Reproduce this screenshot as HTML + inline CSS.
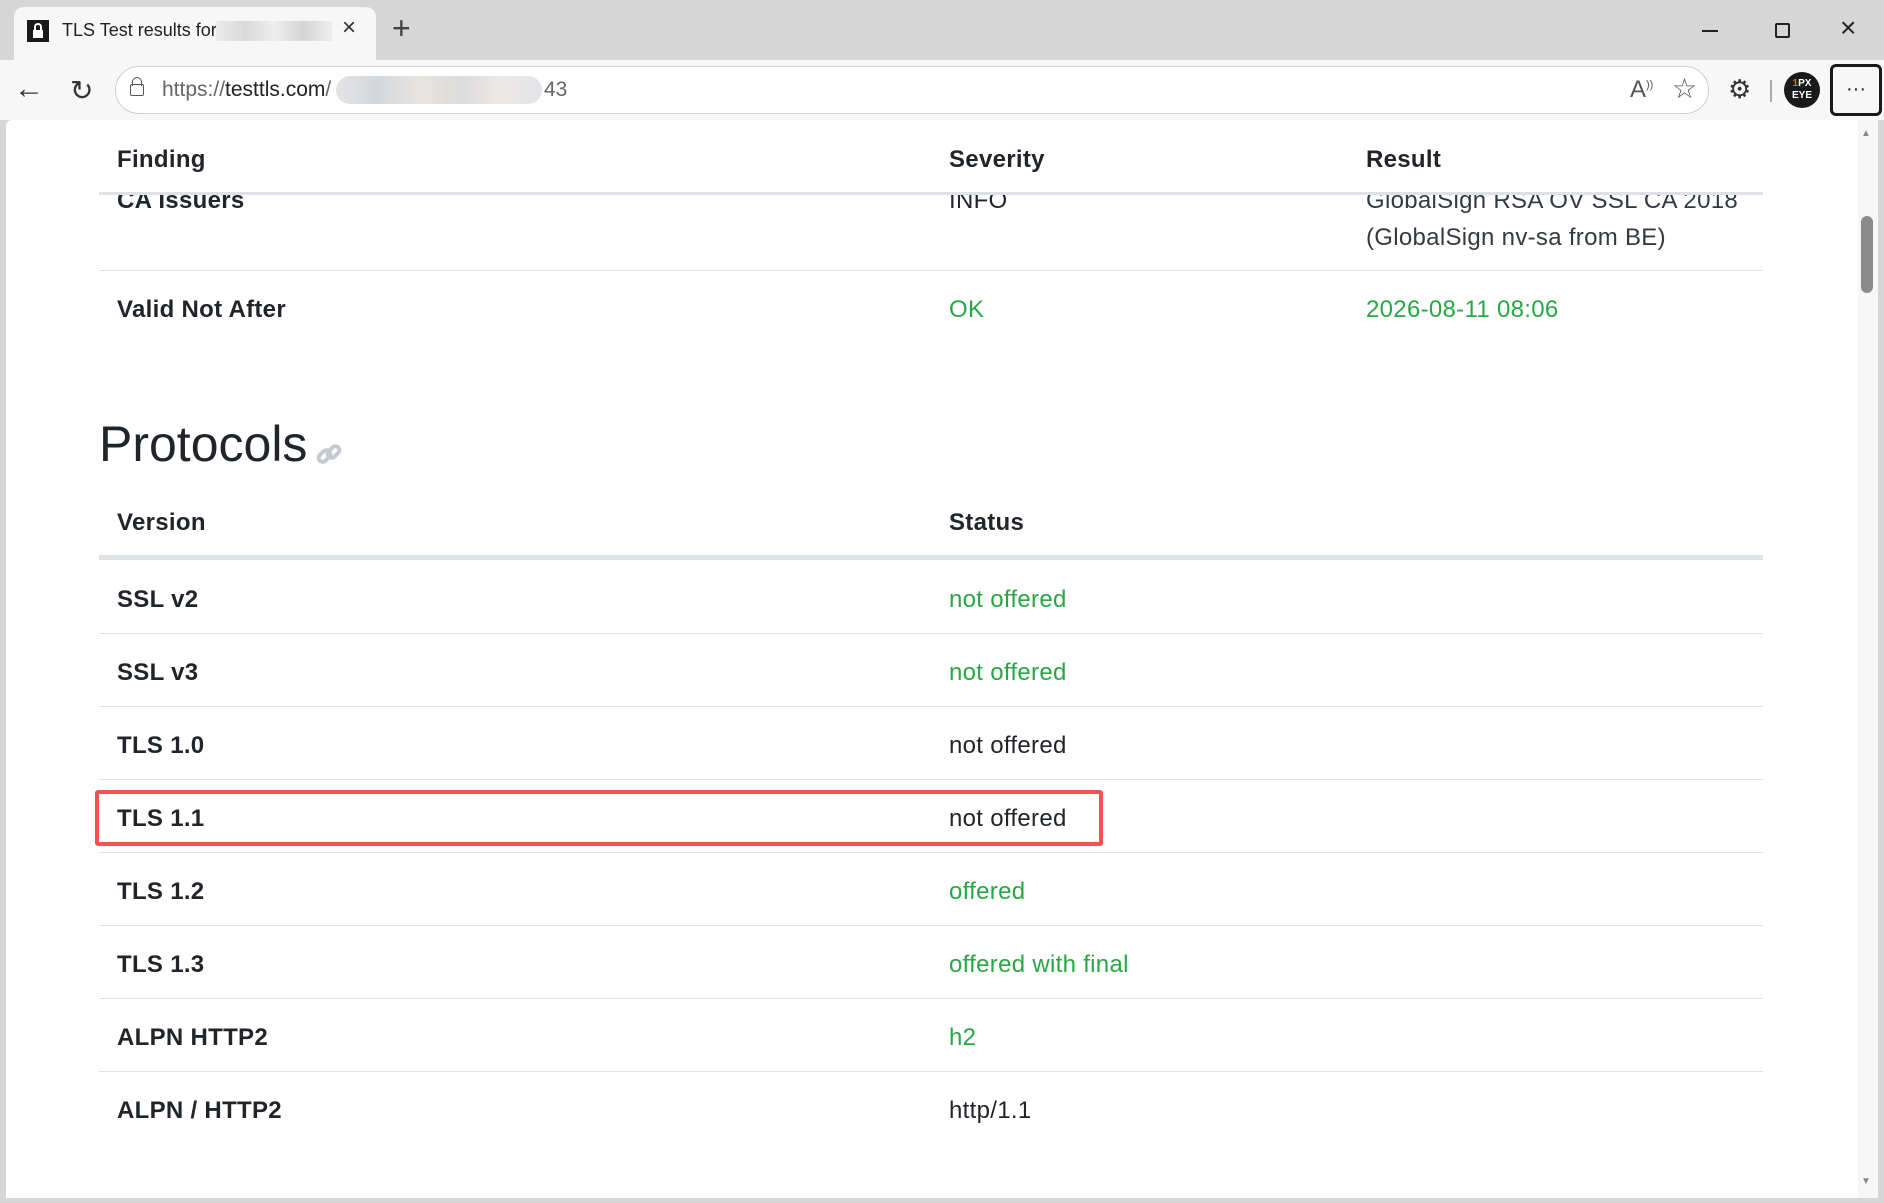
<!DOCTYPE html>
<html><head><meta charset="utf-8"><style>
*{margin:0;padding:0;box-sizing:border-box}
body{width:1884px;height:1203px;overflow:hidden;background:#d6d6d6;font-family:"Liberation Sans",sans-serif;position:relative;color:#212529}
.a{position:absolute;white-space:nowrap}
.t{font-size:24px;line-height:28px;letter-spacing:0.3px;transform:translateY(-13px)}
.b{font-weight:bold}
.g{color:#28a745}
.line{position:absolute;left:99px;width:1664px;height:1px;background:#dee2e6}
</style></head><body>
<!-- tab -->
<div class="a" style="left:14px;top:7px;width:362px;height:54px;background:#f7f7f7;border-radius:10px 10px 0 0"></div>
<div class="a" style="left:27px;top:20px;width:22px;height:22px;background:#1a1a1a"></div>
<div class="a" style="left:33px;top:30px;width:10px;height:8px;background:#fff"></div>
<div class="a" style="left:34px;top:23px;width:8px;height:9px;border:2px solid #fff;border-bottom:none;border-radius:4px 4px 0 0"></div>
<div class="a" style="left:62px;top:20px;font-size:18px;color:#222">TLS Test results for</div>
<div class="a" style="left:216px;top:21px;width:116px;height:20px;background:linear-gradient(90deg,#ececec,#d9d9d9,#eee,#d5d5d5,#eee)"></div>
<div class="a" style="left:342px;top:14px;font-size:24px;color:#333">×</div>
<div class="a" style="left:392px;top:10px;font-size:32px;font-weight:200;color:#444">+</div>
<div class="a" style="left:1702px;top:30px;width:16px;height:2px;background:#222"></div>
<div class="a" style="left:1775px;top:23px;width:15px;height:15px;border:2px solid #222;border-radius:2px"></div>
<div class="a" style="left:1840px;top:12px;font-size:28px;color:#222">×</div>
<!-- toolbar -->
<div class="a" style="left:0;top:60px;width:1884px;height:60px;background:#f7f7f7"></div>
<div class="a" style="left:14px;top:72px;font-size:30px;color:#333">←</div>
<div class="a" style="left:70px;top:74px;font-size:28px;color:#333">↻</div>
<div class="a" style="left:115px;top:66px;width:1594px;height:48px;border:1px solid #d0d0d0;border-radius:24px;background:#fff"></div>
<div class="a" style="left:130px;top:84px;width:14px;height:12px;border:1.5px solid #555;border-radius:2px"></div>
<div class="a" style="left:132px;top:77px;width:10px;height:9px;border:1.5px solid #555;border-bottom:none;border-radius:5px 5px 0 0"></div>
<div class="a" style="left:162px;top:78px;font-size:21px;color:#666">https://<span style="color:#222">testtls.com</span>/</div>
<div class="a" style="left:336px;top:76px;width:206px;height:28px;border-radius:14px;background:linear-gradient(90deg,#e4e4e4,#d3d7dc,#e8e4e0,#dcdcdc,#ece8e6,#e2e4e8)"></div>
<div class="a" style="left:544px;top:78px;font-size:21px;color:#666">43</div>
<div class="a" style="left:1630px;top:76px;font-size:24px;color:#555">A<sup style="font-size:11px">))</sup></div>
<div class="a" style="left:1672px;top:72px;font-size:28px;color:#555">☆</div>
<div class="a" style="left:1728px;top:74px;font-size:26px;color:#333">⚙</div>
<div class="a" style="left:1770px;top:80px;width:2px;height:22px;background:#aaa"></div>
<div class="a" style="left:1784px;top:72px;width:36px;height:36px;border-radius:50%;background:#1a1a1a;color:#fff;font-size:10px;font-weight:bold;text-align:center;line-height:12px;padding-top:6px"><span style="color:#f60">1</span>PX<br>EYE</div>
<div class="a" style="left:1830px;top:64px;width:52px;height:52px;border:3px solid #1a1a1a;border-radius:6px;text-align:center;font-size:20px;line-height:44px;color:#222">···</div>
<!-- page -->
<div class="a" style="left:6px;top:120px;width:1872px;height:1078px;background:#fff;border-radius:6px 6px 0 0"></div>
<div class="a" style="left:1858px;top:120px;width:20px;height:1078px;background:#f7f7f7"></div>
<div class="a" style="left:1861px;top:216px;width:12px;height:77px;border-radius:6px;background:#8a8a8a"></div>
<div class="a" style="left:1861px;top:128px;font-size:10px;color:#888">▲</div>
<div class="a" style="left:1861px;top:1176px;font-size:10px;color:#888">▼</div>

<!-- content -->
<div class="a t" style="left:117px;top:200px;font-weight:bold">CA Issuers</div>
<div class="a t" style="left:949px;top:200px">INFO</div>
<div class="a t" style="left:1366px;top:200px;color:#343a40">GlobalSign RSA OV SSL CA 2018</div>
<div class="a" style="left:99px;top:120px;width:1664px;height:73px;background:#fff"></div>
<div class="a t b" style="left:117px;top:159px">Finding</div>
<div class="a t b" style="left:949px;top:159px">Severity</div>
<div class="a t b" style="left:1366px;top:159px">Result</div>
<div class="a" style="left:99px;top:192px;width:1664px;height:3px;background:#dee2e6"></div>
<div class="a t" style="left:1366px;top:237px;color:#343a40">(GlobalSign nv-sa from BE)</div>
<div class="line" style="top:270px"></div>
<div class="a t b" style="left:117px;top:309px">Valid Not After</div>
<div class="a t g" style="left:949px;top:309px">OK</div>
<div class="a t g" style="left:1366px;top:309px">2026-08-11 08:06</div>

<div class="a" style="left:99px;top:414px;font-size:50px;line-height:60px">Protocols</div>
<svg class="a" style="left:315px;top:440px" width="28" height="28" viewBox="0 0 28 28"><g fill="none" stroke="#c3cad3" stroke-width="4" stroke-linecap="round"><rect x="3" y="12" width="13" height="8" rx="4" transform="rotate(-45 9.5 16)"/><rect x="12" y="8" width="13" height="8" rx="4" transform="rotate(-45 18.5 12)"/></g></svg>

<div class="a t b" style="left:117px;top:522px">Version</div>
<div class="a t b" style="left:949px;top:522px">Status</div>
<div class="a" style="left:99px;top:555px;width:1664px;height:5px;background:#dee2e6"></div>

<div class="a t b" style="left:117px;top:599px">SSL v2</div><div class="a t g" style="left:949px;top:599px">not offered</div>
<div class="line" style="top:633px"></div>
<div class="a t b" style="left:117px;top:672px">SSL v3</div><div class="a t g" style="left:949px;top:672px">not offered</div>
<div class="line" style="top:706px"></div>
<div class="a t b" style="left:117px;top:745px">TLS 1.0</div><div class="a t" style="left:949px;top:745px">not offered</div>
<div class="line" style="top:779px"></div>
<div class="a t b" style="left:117px;top:818px">TLS 1.1</div><div class="a t" style="left:949px;top:818px">not offered</div>
<div class="line" style="top:852px"></div>
<div class="a t b" style="left:117px;top:891px">TLS 1.2</div><div class="a t g" style="left:949px;top:891px">offered</div>
<div class="line" style="top:925px"></div>
<div class="a t b" style="left:117px;top:964px">TLS 1.3</div><div class="a t g" style="left:949px;top:964px">offered with final</div>
<div class="line" style="top:998px"></div>
<div class="a t b" style="left:117px;top:1037px">ALPN HTTP2</div><div class="a t g" style="left:949px;top:1037px">h2</div>
<div class="line" style="top:1071px"></div>
<div class="a t b" style="left:117px;top:1110px">ALPN / HTTP2</div><div class="a t" style="left:949px;top:1110px">http/1.1</div>

<div class="a" style="left:95px;top:790px;width:1008px;height:56px;border:4px solid #f55252;border-radius:3px"></div>
</body></html>
